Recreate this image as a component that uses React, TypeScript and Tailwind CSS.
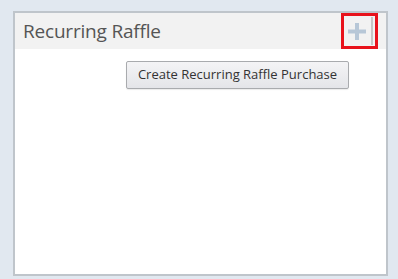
import React from 'react';

export default function App() {
  return (
    <div className="w-[398px] h-[279px] bg-[#e1e8f0] pt-[11px] pl-[13px]" style={{ fontFamily: '"Open Sans", "Noto Sans", sans-serif' }}>
      <div className="w-[375px] h-[265px] border-2 border-[#bfc5cb] bg-white flex flex-col">
        {/* Header */}
        <div className="h-[36px] bg-[#f2f2f2] flex items-center justify-between pl-[8px] pr-[8px]">
          <h2 className="text-[19px] text-[#555555] leading-none tracking-[-0.2px]">Recurring Raffle</h2>
          <div className="w-[37px] h-[36px] border-[3px] border-[#e8121b] flex items-center justify-between pl-[4px] pr-[2px]">
            <svg width="18" height="17" viewBox="0 0 18 17">
              <rect x="7" y="0" width="4" height="17" fill="#b7c7d7" />
              <rect x="0" y="6.5" width="18" height="4" fill="#b7c7d7" />
            </svg>
            <div className="w-[2px] h-[28px] bg-[#c6c6c6]" />
          </div>
        </div>
        {/* Body */}
        <div className="flex justify-end pt-[12px] pr-[37px]">
          <button className="h-[28px] w-[223px] border border-[#a9abae] rounded-[2px] bg-gradient-to-b from-[#f4f4f6] to-[#e4e5e9] text-[13px] text-[#333333] shadow-[0_1px_1px_rgba(0,0,0,0.08)]">
            Create Recurring Raffle Purchase
          </button>
        </div>
      </div>
    </div>
  );
}
